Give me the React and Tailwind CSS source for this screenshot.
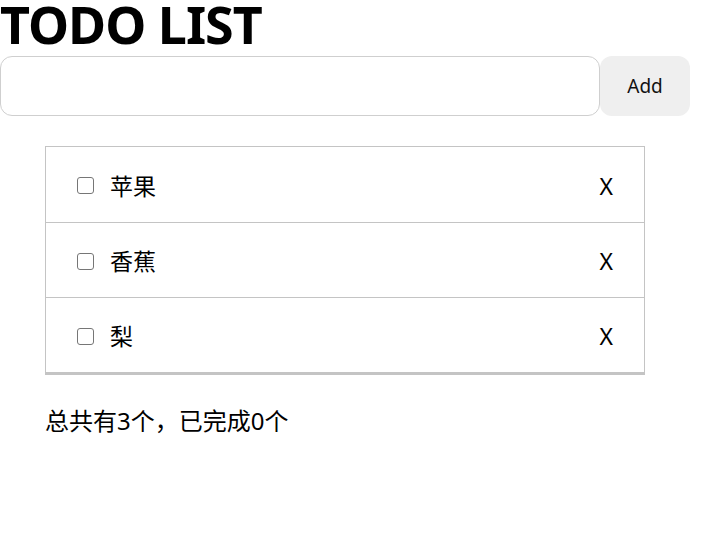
import React, { useState } from 'react';

const initialTodos = [
  { id: 1, name: '苹果', done: false },
  { id: 2, name: '香蕉', done: false },
  { id: 3, name: '梨', done: false },
];

const App = () => {
  const [todos, setTodos] = useState(initialTodos);
  const [text, setText] = useState('');

  const addTodo = () => {
    if (!text.trim()) return;
    setTodos([...todos, { id: Date.now(), name: text.trim(), done: false }]);
    setText('');
  };

  const toggle = (id) => {
    setTodos(todos.map((t) => (t.id === id ? { ...t, done: !t.done } : t)));
  };

  const remove = (id) => {
    setTodos(todos.filter((t) => t.id !== id));
  };

  const doneCount = todos.filter((t) => t.done).length;

  return (
    <div className="w-[728px] min-h-[549px] bg-white text-black font-['Noto_Sans','Noto_Sans_CJK_SC',sans-serif]">
      <h1 className="text-[52px] font-bold leading-[48px] tracking-[-1px] pb-[8px]">TODO LIST</h1>
      <div className="flex">
        <input
          value={text}
          onChange={(e) => setText(e.target.value)}
          className="w-[600px] h-[60px] border border-[#cfcfcf] rounded-[12px] px-3 text-[20px] outline-none"
        />
        <button
          onClick={addTodo}
          className="w-[90px] h-[60px] bg-[#efefef] rounded-[12px] text-[19px] text-[#111]"
        >
          Add
        </button>
      </div>
      <ul className="ml-[45px] mt-[30px] w-[600px] border border-[#c4c4c4]">
        {todos.map((t) => (
          <li
            key={t.id}
            className="flex items-center h-[75.5px] pt-[3px] border-b border-[#c4c4c4] last:border-b-2 pl-[31px] pr-[31px] text-[23px]"
          >
            <span
              onClick={() => toggle(t.id)}
              className="w-[17px] h-[17px] border border-[#767676] rounded-[3px] mr-[16px] bg-white"
            />
            <span className="flex-1">{t.name}</span>
            <span onClick={() => remove(t.id)} className="cursor-pointer text-[23px]">X</span>
          </li>
        ))}
      </ul>
      <p className="ml-[45px] mt-[30px] text-[24px] leading-[32px]">
        总共有{todos.length}个，已完成{doneCount}个
      </p>
    </div>
  );
};

export default App;
